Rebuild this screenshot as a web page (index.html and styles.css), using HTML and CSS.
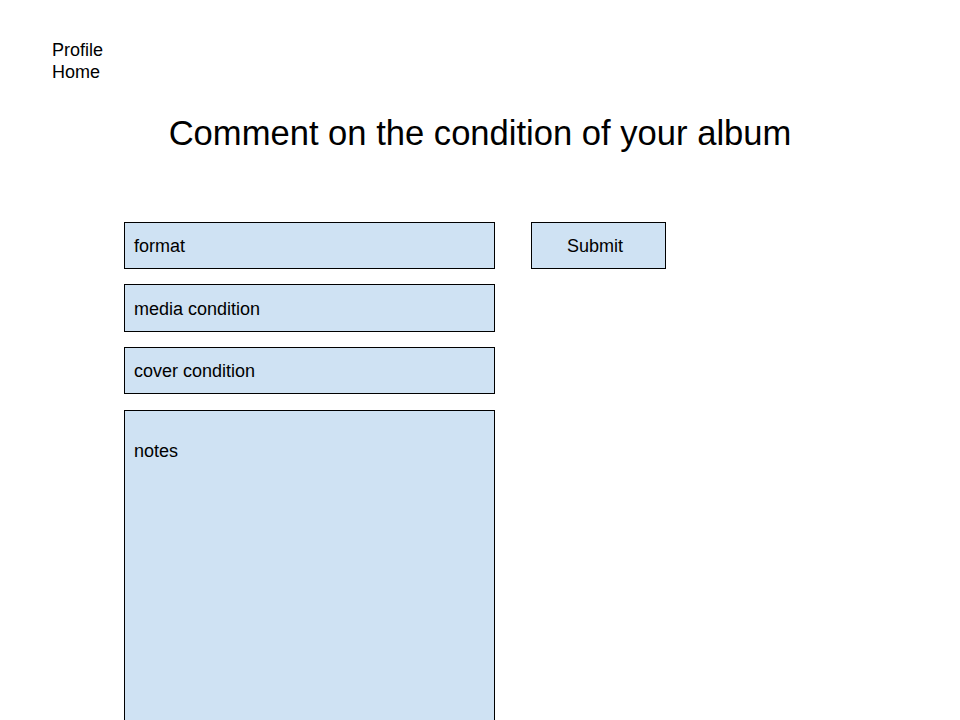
FILE: index.html
```html
<!DOCTYPE html>
<html>
<head>
<meta charset="utf-8">
<link rel="stylesheet" href="styles.css">
</head>
<body>
<nav class="nav">
  <div class="nav-link">Profile</div>
  <div class="nav-link">Home</div>
</nav>
<h1 class="title">Comment on the condition of your album</h1>
<div class="form">
  <div class="fields">
    <div class="field">format</div>
    <div class="field field-tall">media condition</div>
    <div class="field">cover condition</div>
    <div class="field notes">notes</div>
  </div>
  <div class="actions">
    <div class="submit">Submit</div>
  </div>
</div>
</body>
</html>
```
FILE: styles.css
```css
html, body {
  margin: 0;
  padding: 0;
  background: #ffffff;
  font-family: "Liberation Sans", Arial, sans-serif;
  color: #000000;
  overflow: hidden;
  height: 720px;
}
.nav {
  padding: 39px 0 0 52px;
  font-size: 18px;
  line-height: 22px;
}
.title {
  margin: 30px 0 0 0;
  text-align: center;
  font-weight: normal;
  font-size: 34.6px;
  line-height: 40px;
}
.form {
  display: flex;
  gap: 36px;
  margin: 69px 0 0 124px;
}
.fields {
  display: flex;
  flex-direction: column;
  gap: 15px;
}
.field {
  box-sizing: border-box;
  width: 371px;
  height: 47px;
  background: #cfe2f3;
  border: 1px solid #000000;
  padding: 2px 9px 0 9px;
  font-size: 18px;
  display: flex;
  align-items: center;
}
.field-tall {
  height: 48px;
}
.notes {
  height: 340px;
  margin-top: 1px;
  align-items: flex-start;
  padding-top: 30px;
}
.submit {
  box-sizing: border-box;
  width: 135px;
  height: 47px;
  background: #cfe2f3;
  border: 1px solid #000000;
  padding: 2px 7px 0 0;
  font-size: 18px;
  display: flex;
  align-items: center;
  justify-content: center;
}
```
